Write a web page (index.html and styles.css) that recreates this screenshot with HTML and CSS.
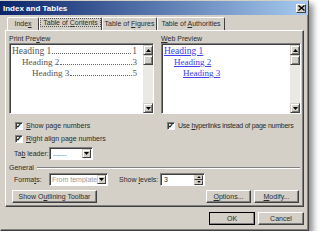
FILE: index.html
```html
<!DOCTYPE html>
<html lang="en">

<head>
    <meta charset="UTF-8" />
    <title>Index and Tables</title>
    <link rel="stylesheet" href="styles.css">
</head>

<body>
    <div class="dialog">
        <div class="titlebar">
            <span class="title">Index and Tables</span>
            <span class="close">
                <svg width="7" height="6" viewBox="0 0 7 6"><path d="M0.5 0.5 L6.5 5.5 M6.5 0.5 L0.5 5.5" stroke="#000" stroke-width="1.4"/></svg>
            </span>
        </div>

        <div class="content">
            <div class="tabs">
                <div class="tab tab-index">Inde<u>x</u></div>
                <div class="tab tab-toc active"><span class="focus">Table of <u>C</u>ontents</span></div>
                <div class="tab tab-tof">Table of <u>F</u>igures</div>
                <div class="tab tab-toa">Table of <u>A</u>uthorities</div>
            </div>

            <div class="panel">
                <div class="previews">
                    <div class="col col-print">
                        <div class="grp-label">Print Pre<u>v</u>iew</div>
                        <div class="preview">
                            <div class="preview-body print-body">
                                <div class="toc-line lvl1"><span>Heading 1</span><span class="dots"></span><span class="num">1</span></div>
                                <div class="toc-line lvl2"><span>Heading 2</span><span class="dots"></span><span class="num">3</span></div>
                                <div class="toc-line lvl3"><span>Heading 3</span><span class="dots"></span><span class="num">5</span></div>
                            </div>
                            <div class="scrollbar">
                                <div class="sb-btn"><svg width="5" height="3" viewBox="0 0 5 3"><path d="M2.5 0 L5 3 L0 3 Z" fill="#000"/></svg></div>
                                <div class="sb-thumb"></div>
                                <div class="sb-track"></div>
                                <div class="sb-btn"><svg width="5" height="3" viewBox="0 0 5 3"><path d="M0 0 L5 0 L2.5 3 Z" fill="#000"/></svg></div>
                            </div>
                        </div>
                        <div class="check first"><span class="box">&#10003;</span><span><u>S</u>how page numbers</span></div>
                        <div class="check"><span class="box">&#10003;</span><span><u>R</u>ight align page numbers</span></div>
                        <div class="field-row leader-row">
                            <span class="lbl">Ta<u>b</u> leader:</span>
                            <div class="select leader">
                                <span class="select-text">.......</span>
                                <span class="dd-btn"><svg width="5" height="3" viewBox="0 0 5 3"><path d="M0 0 L5 0 L2.5 3 Z" fill="#000"/></svg></span>
                            </div>
                        </div>
                    </div>

                    <div class="col col-web">
                        <div class="grp-label"><u>W</u>eb Preview</div>
                        <div class="preview">
                            <div class="preview-body web-body">
                                <div class="web-line lvl1"><span>Heading 1</span></div>
                                <div class="web-line lvl2"><span>Heading 2</span></div>
                                <div class="web-line lvl3"><span>Heading 3</span></div>
                            </div>
                            <div class="scrollbar">
                                <div class="sb-btn"><svg width="5" height="3" viewBox="0 0 5 3"><path d="M2.5 0 L5 3 L0 3 Z" fill="#000"/></svg></div>
                                <div class="sb-thumb"></div>
                                <div class="sb-track"></div>
                                <div class="sb-btn"><svg width="5" height="3" viewBox="0 0 5 3"><path d="M0 0 L5 0 L2.5 3 Z" fill="#000"/></svg></div>
                            </div>
                        </div>
                        <div class="check first"><span class="box">&#10003;</span><span class="tight">Use <u>h</u>yperlinks instead of page numbers</span></div>
                    </div>
                </div>

                <div class="general">
                    <div class="legend"><span>General</span><span class="rule"></span></div>
                    <div class="field-row formats-row">
                        <span class="lbl">Forma<u>t</u>s:</span>
                        <div class="select formats">
                            <span class="select-text muted">From template</span>
                            <span class="dd-btn"><svg width="5" height="3" viewBox="0 0 5 3"><path d="M0 0 L5 0 L2.5 3 Z" fill="#000"/></svg></span>
                        </div>
                        <span class="lbl levels-lbl">Show <u>l</u>evels:</span>
                        <div class="spin">
                            <span class="select-text">3</span>
                            <span class="spin-btns">
                                <span class="spin-btn"><svg width="5" height="3" viewBox="0 0 5 3"><path d="M2.5 0 L5 3 L0 3 Z" fill="#000"/></svg></span>
                                <span class="spin-btn"><svg width="5" height="3" viewBox="0 0 5 3"><path d="M0 0 L5 0 L2.5 3 Z" fill="#000"/></svg></span>
                            </span>
                        </div>
                    </div>
                    <div class="btn-row">
                        <button class="btn outline-btn">Show O<u>u</u>tlining Toolbar</button>
                        <span class="spacer"></span>
                        <button class="btn small-btn"><u>O</u>ptions...</button>
                        <button class="btn small-btn"><u>M</u>odify...</button>
                    </div>
                </div>
            </div>

            <div class="footer">
                <button class="btn foot-btn default">OK</button>
                <button class="btn foot-btn">Cancel</button>
            </div>
        </div>
    </div>
</body>

</html>
```

FILE: styles.css
```css
:root {
    --face: #d4d0c8;
    --shade: #808080;
    --dark: #404040;
    --link: #4040f0;
}

* {
    box-sizing: border-box;
}

body {
    margin: 0;
    background: #ffffff;
    font-family: "Liberation Sans", Arial, sans-serif;
    font-size: 7px;
    color: #2a2a2a;
    white-space: nowrap;
}

.dialog {
    width: 309px;
    height: 231px;
    background: var(--face);
    border: 1px solid;
    border-color: var(--face) var(--dark) var(--dark) var(--face);
    box-shadow: inset -1px -1px var(--shade), 4px 4px 6px rgba(0, 0, 0, 0.45);
    display: flex;
    flex-direction: column;
}

.titlebar {
    height: 14px;
    margin: 0 0 0 -1px;
    padding: 0 2px 0 3px;
    background: linear-gradient(to right, #0a246a, #a6caf0);
    display: flex;
    align-items: center;
    justify-content: space-between;
}

.title {
    color: #fff;
    font-weight: bold;
    font-size: 8px;
}

.close {
    width: 10px;
    height: 9px;
    background: var(--face);
    border: 1px solid;
    border-color: #fff var(--dark) var(--dark) #fff;
    display: flex;
    align-items: center;
    justify-content: center;
}

.content {
    flex: 1;
    padding: 2px 4px 0 4px;
    display: flex;
    flex-direction: column;
}

/* tabs */
.tabs {
    display: flex;
    height: 13px;
    padding-left: 2px;
}

.tab {
    height: 13px;
    padding-top: 2px;
    border: 1px solid;
    border-bottom: none;
    border-color: #fff var(--dark) transparent #fff;
    border-radius: 2px 2px 0 0;
    text-align: center;
}

.tab-index { width: 32px; }
.tab-toc { width: 63px; }
.tab-tof { width: 55px; }
.tab-toa { width: 68px; }

.tab.active {
    padding-top: 1px;
}

.focus {
    display: inline-block;
    padding: 0 2px;
    outline: 1px dotted #555;
}

.panel {
    height: 177px;
    border: 1px solid;
    border-color: #fff var(--dark) var(--dark) #fff;
    box-shadow: inset -1px -1px var(--shade);
    padding: 3px 2px 0 3px;
    display: flex;
    flex-direction: column;
}

.previews {
    display: flex;
    gap: 7px;
}

.col-print {
    width: 145px;
}

.col-web {
    width: 140px;
}

.grp-label {
    height: 9px;
    line-height: 9px;
}

.preview {
    height: 71px;
    background: #fff;
    border: 1px solid;
    border-color: var(--shade) #fff #fff var(--shade);
    box-shadow: inset 1px 1px var(--dark);
    display: flex;
    padding: 1px 0 0 1px;
}

.preview-body {
    flex: 1;
    min-width: 0;
    overflow: hidden;
    padding: 1px 2px 0 1px;
    font-family: "Liberation Serif", "Times New Roman", serif;
}

.toc-line {
    display: flex;
    align-items: baseline;
    height: 11px;
    line-height: 11px;
    color: #555;
    font-size: 9px;
}

.toc-line.lvl1 {
    font-size: 9.5px;
}

.toc-line.lvl2 { padding-left: 10px; }
.toc-line.lvl3 { padding-left: 20px; }

/* dotted tab leader */
.dots {
    flex: 1;
    height: 1px;
    margin: 0 1px;
    border-bottom: 1px dotted #666;
}

.num {
    padding-right: 4px;
}

.web-line {
    height: 11px;
    line-height: 11px;
    font-size: 9px;
    color: var(--link);
}

.web-line span {
    text-decoration: underline;
}

.web-line.lvl1 { font-size: 9.5px; }
.web-line.lvl2 { padding-left: 10px; }
.web-line.lvl3 { padding-left: 19px; }

.scrollbar {
    width: 10px;
    display: flex;
    flex-direction: column;
    background: #ebe9e4;
}

.sb-btn,
.sb-thumb {
    height: 10px;
    background: var(--face);
    border: 1px solid;
    border-color: var(--face) var(--dark) var(--dark) var(--face);
    box-shadow: inset 1px 1px #fff, inset -1px -1px var(--shade);
    display: flex;
    align-items: center;
    justify-content: center;
}

.sb-track {
    flex: 1;
}

.check {
    display: flex;
    align-items: center;
    gap: 3px;
    height: 13px;
    margin-left: 6px;
}

.check.first {
    margin-top: 5px;
}

.tight {
    letter-spacing: -0.25px;
}

.box {
    width: 8px;
    height: 8px;
    background: #fff;
    border: 1px solid;
    border-color: var(--shade) #fff #fff var(--shade);
    box-shadow: inset 1px 1px var(--dark);
    font-size: 7px;
    line-height: 6px;
    font-weight: bold;
    color: #000;
    text-align: center;
    overflow: hidden;
}

.field-row {
    display: flex;
    align-items: center;
    padding-left: 5px;
}

.leader-row {
    margin-top: 2px;
}

.lbl {
    width: 35px;
}

.select,
.spin {
    height: 13px;
    background: #fff;
    border: 1px solid;
    border-color: var(--shade) #fff #fff var(--shade);
    box-shadow: inset 1px 1px var(--dark);
    display: flex;
    align-items: center;
    padding: 1px 1px 1px 3px;
}

.select-text {
    flex: 1;
    overflow: hidden;
}

.muted {
    color: #999;
}

.leader {
    width: 44px;
}

.dd-btn {
    width: 9px;
    height: 9px;
    flex: none;
    background: var(--face);
    border: 1px solid;
    border-color: var(--face) var(--dark) var(--dark) var(--face);
    box-shadow: inset 1px 1px #fff;
    display: flex;
    align-items: center;
    justify-content: center;
}

.general {
    margin-top: 3px;
}

.legend {
    display: flex;
    align-items: center;
    gap: 3px;
    height: 9px;
}

.rule {
    flex: 1;
    height: 2px;
    border-top: 1px solid var(--shade);
    border-bottom: 1px solid #fff;
    margin-right: 1px;
}

.formats-row {
    margin-top: 1px;
}

.formats {
    width: 59px;
    padding-left: 2px;
}

.levels-lbl {
    margin-left: 11px;
    width: 41px;
}

.spin {
    width: 45px;
    padding-right: 1px;
}

.spin-btns {
    display: flex;
    flex-direction: column;
    width: 9px;
    height: 10px;
}

.spin-btn {
    flex: 1;
    background: var(--face);
    border: 1px solid;
    border-color: var(--face) var(--dark) var(--dark) var(--face);
    display: flex;
    align-items: center;
    justify-content: center;
}

.spin-btn svg {
    width: 4px;
    height: 2px;
}

.btn-row {
    display: flex;
    align-items: center;
    gap: 3px;
    margin-top: 4px;
    padding-left: 3px;
}

.spacer {
    flex: 1;
}

.btn {
    font-family: inherit;
    font-size: 7px;
    color: #2a2a2a;
    height: 13px;
    padding: 0;
    background: var(--face);
    border: 1px solid;
    border-color: #fff var(--dark) var(--dark) #fff;
    box-shadow: inset -1px -1px var(--shade);
}

.outline-btn {
    width: 85px;
}

.small-btn {
    width: 45px;
}

.small-btn:last-child {
    margin-right: 2px;
}

.footer {
    display: flex;
    justify-content: flex-end;
    gap: 3px;
    margin-top: 5px;
}

.foot-btn {
    width: 46px;
}

.foot-btn.default {
    outline: 1px solid #000;
    outline-offset: -1px;
}
```
